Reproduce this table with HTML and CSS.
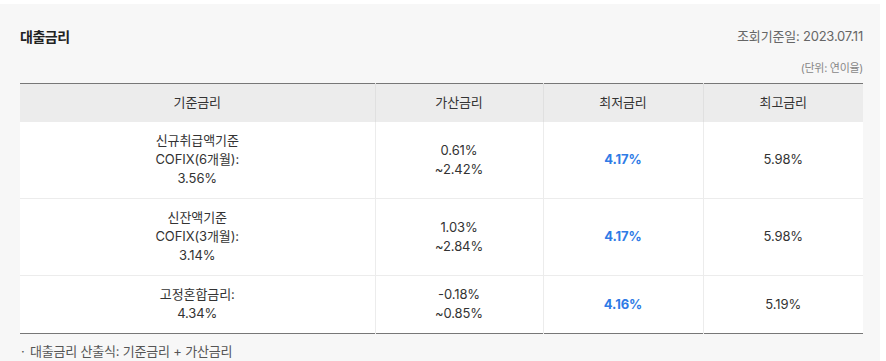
FILE: index.html
```html
<!DOCTYPE html>
<html lang="ko">
<head>
<meta charset="utf-8">
<link rel="stylesheet" href="styles.css">
</head>
<body>
<section class="panel">
  <div class="head">
    <h2 class="title">대출금리</h2>
    <span class="date">조회기준일: 2023.07.11</span>
  </div>
  <div class="unit">(단위: 연이율)</div>
  <table class="rates">
    <colgroup>
      <col class="c1"><col class="c2"><col class="c3"><col class="c4">
    </colgroup>
    <thead>
      <tr><th>기준금리</th><th>가산금리</th><th>최저금리</th><th>최고금리</th></tr>
    </thead>
    <tbody>
      <tr>
        <td>신규취급액기준<br>COFIX(6개월):<br>3.56%</td>
        <td>0.61%<br>~2.42%</td>
        <td class="low">4.17%</td>
        <td>5.98%</td>
      </tr>
      <tr>
        <td>신잔액기준<br>COFIX(3개월):<br>3.14%</td>
        <td>1.03%<br>~2.84%</td>
        <td class="low">4.17%</td>
        <td>5.98%</td>
      </tr>
      <tr>
        <td>고정혼합금리:<br>4.34%</td>
        <td>-0.18%<br>~0.85%</td>
        <td class="low">4.16%</td>
        <td>5.19%</td>
      </tr>
    </tbody>
  </table>
  <p class="note"><span class="dot">·</span>대출금리 산출식: 기준금리 + 가산금리</p>
</section>
</body>
</html>
```
FILE: styles.css
```css
html, body {
  margin: 0;
  padding: 0;
  background: #ffffff;
}
body {
  font-family: Inter, "Noto Sans CJK KR", "Noto Sans", sans-serif;
  color: #333;
}
.panel {
  margin-top: 4px;
  width: 880px;
  height: 357px;
  box-sizing: border-box;
  background: #f7f7f7;
  padding: 0 17px 0 20px;
  overflow: hidden;
}
.head {
  display: flex;
  justify-content: space-between;
  align-items: center;
  padding-top: 21px;
  height: 22px;
}
.title {
  margin: 0;
  font-family: "Noto Sans CJK KR", sans-serif;
  font-size: 14px;
  font-weight: 700;
  color: #222;
  letter-spacing: -0.5px;
  line-height: 22px;
}
.date {
  font-size: 13px;
  color: #666;
  line-height: 22px;
  letter-spacing: -0.2px;
}
.unit {
  text-align: right;
  font-size: 11px;
  color: #888;
  margin-top: 13px;
  line-height: 16px;
  letter-spacing: -0.3px;
}
.rates {
  margin-top: 7px;
  width: 843px;
  border-collapse: collapse;
  border-top: 1px solid #777;
  border-bottom: 1px solid #777;
  font-size: 13px;
  line-height: 19px;
  text-align: center;
  letter-spacing: -0.1px;
}
.c1 { width: 355px; }
.c2 { width: 168px; }
.c3 { width: 160px; }
.c4 { width: 160px; }
.rates th {
  background: #ececec;
  font-weight: 400;
  color: #333;
  padding: 9px 0 10px;
  border-left: 1px solid #e0e0e0;
}
.rates td {
  background: #fff;
  padding: 9px 0 10px;
  border-left: 1px solid #ececec;
  border-top: 1px solid #ececec;
  color: #333;
}
.rates th:first-child, .rates td:first-child { border-left: none; }
.rates tbody tr:first-child td { border-top: none; }
.rates td.low {
  color: #2f7be6;
  font-weight: 700;
}
.note {
  margin: 8px 0 0;
  font-size: 13px;
  line-height: 18px;
  color: #555;
  letter-spacing: -0.2px;
}
.dot {
  display: inline-block;
  width: 9px;
  margin-left: 1px;
}
```
